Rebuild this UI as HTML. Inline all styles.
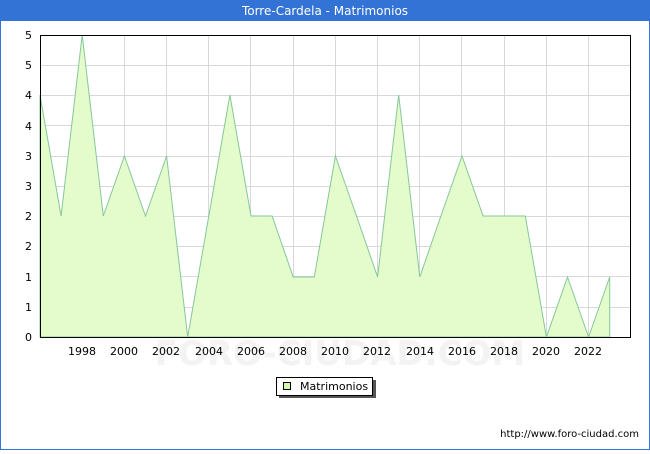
<!DOCTYPE html>
<html><head><style>
body{margin:0;width:650px;height:450px;overflow:hidden;font-family:"DejaVu Sans","Liberation Sans",sans-serif;}
</style></head><body>
<svg width="650" height="450" xmlns="http://www.w3.org/2000/svg" font-family="DejaVu Sans, Liberation Sans, sans-serif">
<rect x="0" y="0" width="650" height="450" fill="#fff"/>
<rect x="0.5" y="0.5" width="649" height="449" fill="none" stroke="#3473d6"/>
<rect x="0" y="0" width="650" height="21" fill="#3473d6"/>
<text x="325" y="15" text-anchor="middle" fill="#fff" font-size="12">Torre-Cardela - Matrimonios</text>
<g stroke="#d8d8d8" stroke-width="1">
<line x1="40" y1="65.5" x2="630" y2="65.5"/><line x1="40" y1="95.5" x2="630" y2="95.5"/>
<line x1="40" y1="125.5" x2="630" y2="125.5"/><line x1="40" y1="156.5" x2="630" y2="156.5"/>
<line x1="40" y1="186.5" x2="630" y2="186.5"/><line x1="40" y1="216.5" x2="630" y2="216.5"/>
<line x1="40" y1="246.5" x2="630" y2="246.5"/><line x1="40" y1="276.5" x2="630" y2="276.5"/>
<line x1="40" y1="307.5" x2="630" y2="307.5"/>
<line x1="82.5" y1="35" x2="82.5" y2="337"/><line x1="124.5" y1="35" x2="124.5" y2="337"/>
<line x1="166.5" y1="35" x2="166.5" y2="337"/><line x1="208.5" y1="35" x2="208.5" y2="337"/>
<line x1="250.5" y1="35" x2="250.5" y2="337"/><line x1="293.5" y1="35" x2="293.5" y2="337"/>
<line x1="335.5" y1="35" x2="335.5" y2="337"/><line x1="377.5" y1="35" x2="377.5" y2="337"/>
<line x1="419.5" y1="35" x2="419.5" y2="337"/><line x1="461.5" y1="35" x2="461.5" y2="337"/>
<line x1="504.5" y1="35" x2="504.5" y2="337"/><line x1="546.5" y1="35" x2="546.5" y2="337"/>
<line x1="588.5" y1="35" x2="588.5" y2="337"/>
</g>
<text x="340" y="365" text-anchor="middle" fill="#f3f3f3" font-size="34" font-weight="bold">FORO-CIUDAD.COM</text>
<polygon fill="#e4fccc" stroke="#86c79a" stroke-width="1" points="40,337 40,95 61.1,216 82.2,35 103.3,216 124.4,156 145.5,216 166.6,156 187.7,337 208.8,216 229.9,95 251,216 272.1,216 293.2,277 314.3,277 335.4,156 356.5,216 377.6,277 398.7,95 419.8,277 440.9,216 462,156 483.1,216 504.2,216 525.3,216 546.4,337 567.5,277 588.6,337 609.7,277 609.7,337"/>
<rect x="40.5" y="35.5" width="590" height="302" fill="none" stroke="#000"/>
<g font-size="11" fill="#000" text-anchor="end">
<text x="32" y="341">0</text><text x="32" y="311">1</text><text x="32" y="281">1</text>
<text x="32" y="250">2</text><text x="32" y="220">2</text><text x="32" y="190">3</text>
<text x="32" y="160">3</text><text x="32" y="130">4</text><text x="32" y="99">4</text>
<text x="32" y="69">5</text><text x="32" y="39">5</text>
</g>
<g font-size="11" fill="#000" text-anchor="middle">
<text x="82" y="355">1998</text><text x="124" y="355">2000</text><text x="166" y="355">2002</text>
<text x="209" y="355">2004</text><text x="251" y="355">2006</text><text x="293" y="355">2008</text>
<text x="335" y="355">2010</text><text x="377" y="355">2012</text><text x="420" y="355">2014</text>
<text x="462" y="355">2016</text><text x="504" y="355">2018</text><text x="546" y="355">2020</text>
<text x="588" y="355">2022</text>
</g>
<rect x="279" y="380" width="97" height="18" fill="#555"/>
<rect x="276.5" y="377.5" width="96" height="18" fill="#fff" stroke="#000"/>
<rect x="283.5" y="382.5" width="7" height="7" fill="#d4f7b0" stroke="#000"/>
<text x="300" y="390" font-size="11" fill="#000">Matrimonios</text>
<text x="639" y="437" text-anchor="end" font-size="10" fill="#000">http://www.foro-ciudad.com</text>
</svg>
</body></html>
